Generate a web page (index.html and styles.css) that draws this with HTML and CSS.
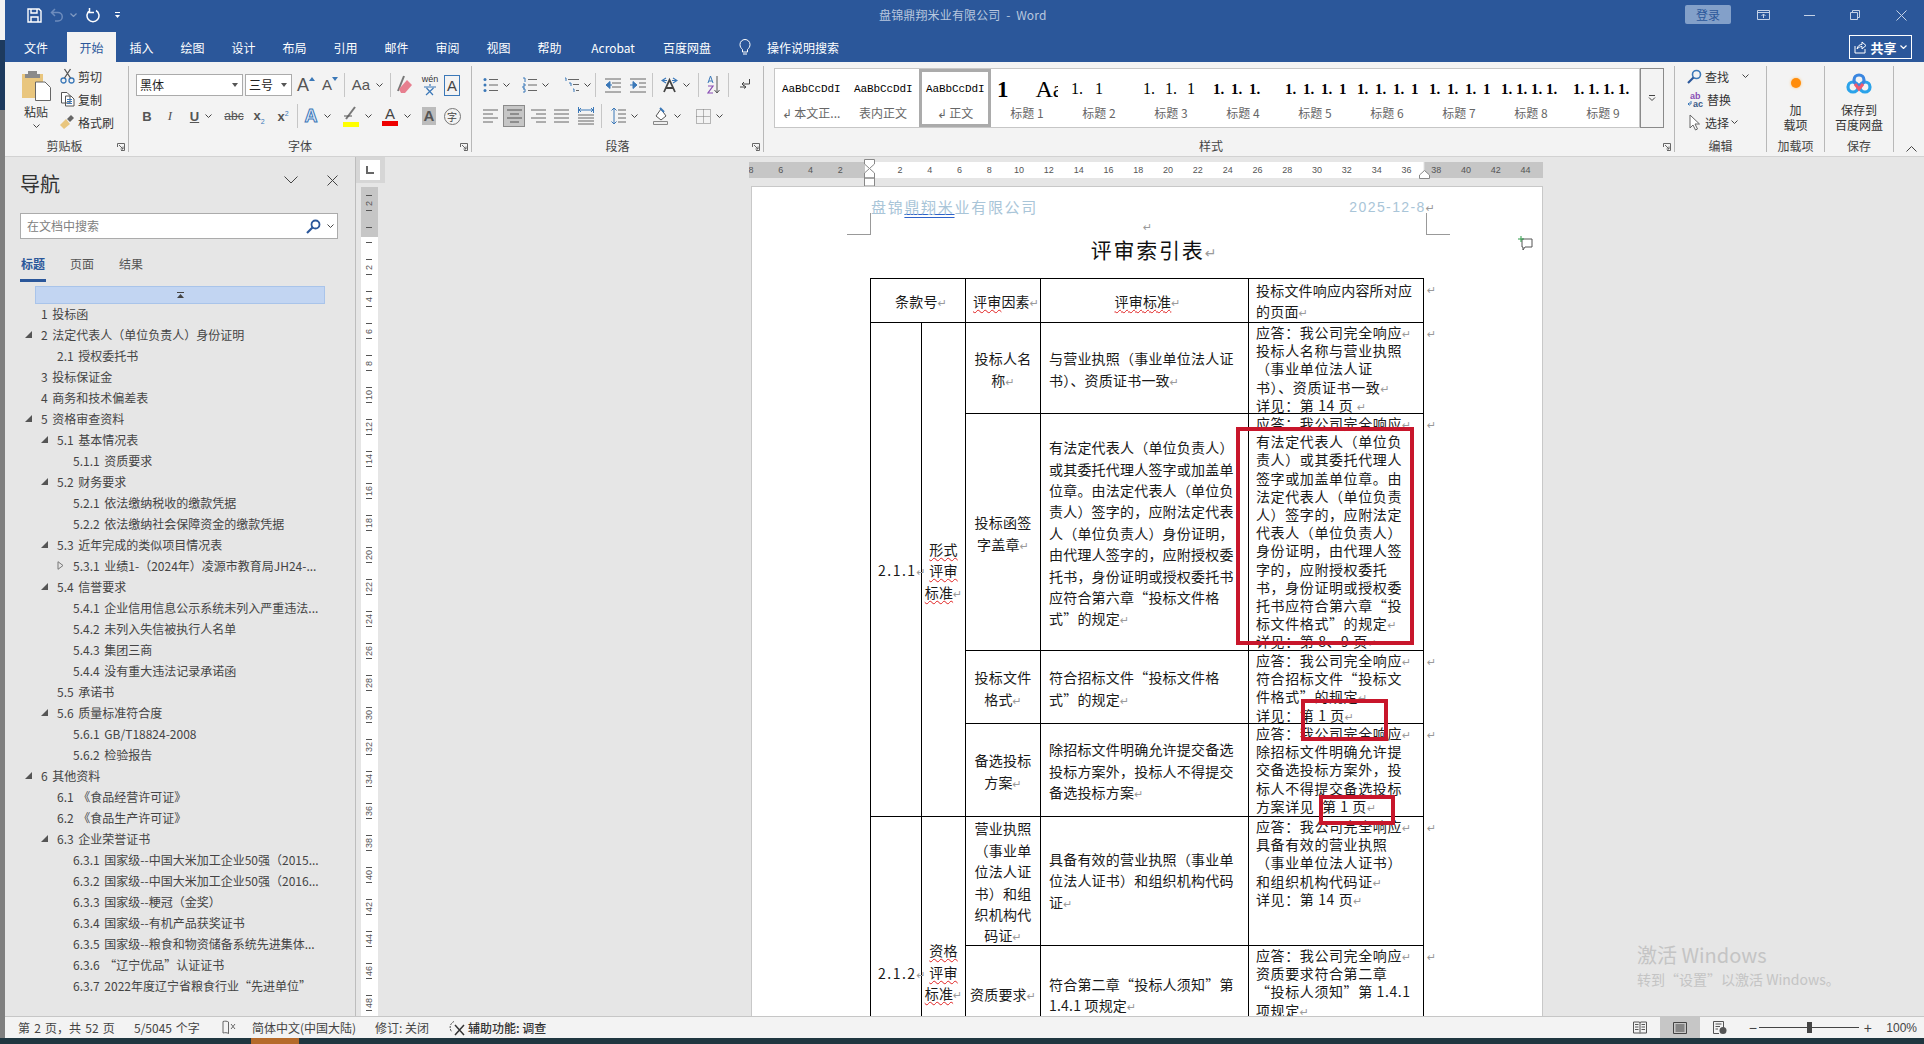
FILE: index.html
```html
<!DOCTYPE html>
<html lang="zh-CN">
<head>
<meta charset="utf-8">
<title>盘锦鼎翔米业有限公司 - Word</title>
<link rel="stylesheet" href="styles.css">
</head>
<body>
<svg class="sprite" aria-hidden="true">
  <symbol id="chev" viewBox="0 0 7 4"><path d="M.5.5 3.5 3.5 6.5.5" fill="none" stroke="#444" stroke-width="1"/></symbol>
  <symbol id="chevw" viewBox="0 0 7 4"><path d="M.5.5 3.5 3.5 6.5.5" fill="none" stroke="#fff" stroke-width="1.2"/></symbol>
  <symbol id="launch" viewBox="0 0 8 8"><path d="M.5 4V.5H7.5V7.5H4M2 2 6 6M6 3.5V6H3.5" fill="none" stroke="#666"/></symbol>
  <symbol id="tri" viewBox="0 0 7 7"><path d="M7 0V7H0Z" fill="#555"/></symbol>
</svg>
<div class="app">
  <div class="edge"></div>
  <div class="window">
    <header class="titlebar">
      <div class="qat">
        <span class="qi"><svg width="15" height="15" viewBox="0 0 15 15"><path d="M1 1H12L14 3V14H1ZM4 1V5H10V1M4 14V9H11V14" fill="none" stroke="#fff" stroke-width="1.4"/></svg></span>
        <span class="qi"><svg width="14" height="14" viewBox="0 0 14 14"><path d="M5 1 1.5 4.5 5 8M2 4.5H8A4 4 0 0 1 8 13H5" fill="none" stroke="#6d8cbd" stroke-width="1.5"/></svg></span>
        <span class="qi"><svg class="cv cv-dim"><use href="#chevw"/></svg></span>
        <span class="qi"><svg width="14" height="15" viewBox="0 0 14 15"><path d="M4 2.500A6 6 0 1 0 10 2.500M3.500 0V4.500H8" fill="none" stroke="#fff" stroke-width="1.5"/></svg></span>
        <span class="qi"><svg width="7" height="8" viewBox="0 0 7 8"><path d="M1 1.500H6" stroke="#fff"/><path d="M1 4H6L3.500 7Z" fill="#fff"/></svg></span>
      </div>
      <div class="doc-title">盘锦鼎翔米业有限公司&nbsp; -&nbsp; Word</div>
      <div class="controls">
        <button class="login">登录</button>
        <span class="ctl"><svg width="13" height="10" viewBox="0 0 13 10"><path d="M.5.5H12.500V9.500H.5ZM.5 2.500H12.500M6.500 8V4M4.500 6 6.500 4 8.500 6" fill="none" stroke="#c5d2e6"/></svg></span>
        <span class="ctl"><svg width="11" height="1" viewBox="0 0 11 1"><path d="M0 .5H11" stroke="#c5d2e6"/></svg></span>
        <span class="ctl"><svg width="10" height="10" viewBox="0 0 10 10"><path d="M.5 2.500H7.500V9.500H.5ZM2.500 2.500V.5H9.500V7.500H7.500" fill="none" stroke="#c5d2e6"/></svg></span>
        <span class="ctl"><svg width="11" height="11" viewBox="0 0 11 11"><path d="M.5.5 10.500 10.500M10.500.5 .5 10.500" stroke="#c5d2e6"/></svg></span>
      </div>
    </header>
    <nav class="tabs">
      <span class="tab tab-file">文件</span>
      <span class="tab tab-on">开始</span>
      <span class="tab">插入</span><span class="tab">绘图</span><span class="tab">设计</span><span class="tab">布局</span><span class="tab">引用</span><span class="tab">邮件</span><span class="tab">审阅</span><span class="tab">视图</span><span class="tab">帮助</span>
      <span class="tab tab-acro">Acrobat</span>
      <span class="tab tab-bd">百度网盘</span>
      <span class="bulb"><svg width="12" height="18" viewBox="0 0 12 18"><path d="M3.500 11.500C2 10 1 8.800 1 6.500A5 5 0 0 1 11 6.500C11 8.800 10 10 8.500 11.500V14H3.500ZM4 16H8" fill="none" stroke="#fff"/></svg></span>
      <span class="tell">操作说明搜索</span>
      <span class="share"><svg width="13" height="14" viewBox="0 0 13 14"><path d="M1 6V13H11V9M3 9C3.500 6 5.500 4.500 8 4.500V2L12 5.500 8 9V6.500C6 6.500 4.500 7.500 3 9Z" fill="none" stroke="#fff"/></svg><b>共享</b><svg class="cv"><use href="#chevw"/></svg></span>
    </nav>
    <section class="ribbon">
      <div class="grp g-clip">
        <div class="clip-body">
          <div class="paste">
            <svg width="29" height="32" viewBox="0 0 29 32"><path d="M0 4H21V28H0Z" fill="#e9c67e"/><path d="M6 4V1H15V4H18V8H3V4Z" fill="#8a8a8a"/><path d="M13.500 12H23L28.500 17.500V30.500H13.500Z" fill="#fff" stroke="#666"/></svg>
            <span class="paste-t">粘贴</span>
            <svg class="cv"><use href="#chev"/></svg>
          </div>
          <div class="clip-list">
            <div class="clip-row"><svg width="15" height="16" viewBox="0 0 15 16"><circle cx="3.500" cy="12.500" r="2.500" fill="none" stroke="#3b78b8" stroke-width="1.300"/><circle cx="11.500" cy="12.500" r="2.500" fill="none" stroke="#3b78b8" stroke-width="1.300"/><path d="M4.500 10 10.500 1M10.500 10 4.500 1" stroke="#555" stroke-width="1.300"/></svg>剪切</div>
            <div class="clip-row"><svg width="15" height="16" viewBox="0 0 15 16"><path d="M1.500 1.500H7L10 4.500V12H1.500ZM5.500 5H11L14 8V15H5.500Z" fill="#fff" stroke="#555"/><path d="M7 8.500H12M7 10.500H12M7 12.500H12" stroke="#3b78b8"/></svg>复制</div>
            <div class="clip-row"><svg width="15" height="16" viewBox="0 0 15 16"><path d="M0 11 6 5 10 10 4 15Z" fill="#e9c67e"/><path d="M7 5 11 1 14 4 10 8Z" fill="#666"/></svg>格式刷</div>
          </div>
        </div>
        <div class="grp-label g-clip-l">剪贴板</div>
        <svg class="launcher"><use href="#launch"/></svg>
      </div>

      <div class="grp g-font">
        <div class="rrow font-r1">
          <div class="sel sel-font">黑体<i></i></div>
          <div class="sel sel-size">三号<i></i></div>
          <span class="ib"><span class="ga">A</span><svg class="up" width="6" height="4" viewBox="0 0 6 4"><path d="M0 4 3 0 6 4Z" fill="#3b78b8"/></svg></span>
          <span class="ib"><span class="ga ga-s">A</span><svg class="up" width="6" height="4" viewBox="0 0 6 4"><path d="M0 0 3 4 6 0Z" fill="#3b78b8"/></svg></span>
          <span class="sep"></span>
          <span class="ib"><span class="ga ga-aa">Aa</span><svg class="cv"><use href="#chev"/></svg></span>
          <span class="sep"></span>
          <span class="ib"><svg width="17" height="20" viewBox="0 0 17 20"><path d="M2 16 8 1" stroke="#777" stroke-width="2"/><path d="M3 14 11 5 16 10 9 18H5Z" fill="#e77f8f"/></svg></span>
          <span class="ib ib-wen"><em>wén</em><svg width="14" height="12" viewBox="0 0 14 12"><path d="M7 0V2M1 3H13M3.500 4 10 11M10.500 4 3 11" stroke="#3b78b8" stroke-width="1.200" fill="none"/></svg></span>
          <span class="ib"><span class="ga-box">A</span></span>
        </div>
        <div class="rrow font-r2">
          <span class="ib"><b class="fb">B</b></span>
          <span class="ib"><i class="fi">I</i></span>
          <span class="ib"><u class="fb fu">U</u><svg class="cv cvg"><use href="#chev"/></svg></span>
          <span class="ib"><s class="fs">abc</s></span>
          <span class="ib"><span class="fb fx">x<sub>2</sub></span></span>
          <span class="ib"><span class="fb fx">x<sup>2</sup></span></span>
          <span class="sep"></span>
          <span class="ib"><span class="ga-glow">A</span><svg class="cv cvg"><use href="#chev"/></svg></span>
          <span class="ib"><svg width="16" height="21" viewBox="0 0 16 21"><path d="M3 13 12 1" stroke="#777" stroke-width="2"/><path d="M1 10H9" stroke="#555"/><path d="M0 16H16V21H0Z" fill="#ff0"/></svg><svg class="cv cvg"><use href="#chev"/></svg></span>
          <span class="ib"><span class="ga-col">A</span><svg class="cv cvg"><use href="#chev"/></svg></span>
          <span class="ib"><span class="ga-grey">A</span></span>
          <span class="ib"><span class="zi">字</span></span>
        </div>
        <div class="grp-label">字体</div>
        <svg class="launcher"><use href="#launch"/></svg>
      </div>

      <div class="grp g-para">
        <div class="rrow para-r1">
          <span class="ib ig"><svg width="15" height="16" viewBox="0 0 15 16"><g fill="#3b78b8"><circle cx="2" cy="2.500" r="1.500"/><circle cx="2" cy="8" r="1.500"/><circle cx="2" cy="13.500" r="1.500"/></g><path d="M6 2.500H15M6 8H15M6 13.500H15" stroke="#666"/></svg><svg class="cv"><use href="#chev"/></svg></span>
          <span class="ib ig"><svg width="15" height="16" viewBox="0 0 15 16"><path d="M1 1H3V5M1 7H3V9H1V11H3M1 12H3V15H1" fill="none" stroke="#3b78b8"/><path d="M6 2.500H15M6 8H15M6 13.500H15" stroke="#666"/></svg><svg class="cv"><use href="#chev"/></svg></span>
          <span class="ib ig"><svg width="15" height="16" viewBox="0 0 15 16"><path d="M1 1H2V4M5 6H7V9M9 12H10V15" fill="none" stroke="#3b78b8"/><path d="M4 2.500H15M9 7.500H15M12 13.500H15" stroke="#666"/></svg><svg class="cv"><use href="#chev"/></svg></span>
          <span class="sep"></span>
          <span class="ib"><svg width="16" height="15" viewBox="0 0 16 15"><path d="M0 1H16M7 5H16M7 9H16M0 14H16" stroke="#666"/><path d="M5 3.500 1 7 5 10.500ZM3 7H7" fill="#3b78b8" stroke="#3b78b8"/></svg></span>
          <span class="ib"><svg width="16" height="15" viewBox="0 0 16 15"><path d="M0 1H16M0 14H16M9 5H16M9 9H16" stroke="#666"/><path d="M3 3.500 7 7 3 10.500ZM0 7H4" fill="#3b78b8" stroke="#3b78b8"/></svg></span>
          <span class="sep"></span>
          <span class="ib ig"><svg width="17" height="16" viewBox="0 0 17 16"><path d="M5 1 1 3.500 5 6M12 1 16 3.500 12 6M2 3.500H6M11 3.500H15" fill="none" stroke="#3b78b8" stroke-width="1.200"/><path d="M3 15 8.500 3 14 15M5 11H12" fill="none" stroke="#444" stroke-width="1.800"/></svg><svg class="cv"><use href="#chev"/></svg></span>
          <span class="sep"></span>
          <span class="ib"><svg width="13" height="20" viewBox="0 0 13 20"><path d="M1 8 3.500 1 6 8M2 6H5" fill="none" stroke="#3b78b8"/><path d="M1 11H6L1 18H6" fill="none" stroke="#8a4fb5" stroke-width="1.200"/><path d="M10 1V18M7.500 15 10 18 12.500 15" fill="none" stroke="#555"/></svg></span>
          <span class="sep"></span>
          <span class="ib"><svg width="12" height="14" viewBox="0 0 12 14"><path d="M10.500 1V6H3M5 4 3 6 5 8" fill="none" stroke="#444"/><path d="M1 9H7M5 7.500 7 9 5 10.500" fill="none" stroke="#444"/></svg></span>
        </div>
        <div class="rrow para-r2">
          <span class="ib"><svg width="15" height="14" viewBox="0 0 15 14"><path d="M0 1H15M0 5H10M0 9H15M0 13H10" stroke="#666"/></svg></span>
          <span class="ib ib-on"><svg width="15" height="14" viewBox="0 0 15 14"><path d="M0 1H15M3 5H12M0 9H15M3 13H12" stroke="#555"/></svg></span>
          <span class="ib"><svg width="15" height="14" viewBox="0 0 15 14"><path d="M0 1H15M5 5H15M0 9H15M5 13H15" stroke="#666"/></svg></span>
          <span class="ib"><svg width="15" height="14" viewBox="0 0 15 14"><path d="M0 1H15M0 5H15M0 9H15M0 13H15" stroke="#666"/></svg></span>
          <span class="ib"><svg width="16" height="19" viewBox="0 0 16 19"><path d="M0 8H16M0 11H16M0 14H16M0 17H16" stroke="#666"/><path d="M1 3H15M3 1 1 3 3 5M13 1 15 3 13 5M.5 0V6M15.500 0V6" fill="none" stroke="#3b78b8"/></svg></span>
          <span class="sep"></span>
          <span class="ib ig"><svg width="15" height="18" viewBox="0 0 15 18"><path d="M3 1V17M.5 3.500 3 1 5.500 3.500M.5 14.500 3 17 5.500 14.500" fill="none" stroke="#3b78b8"/><path d="M7 3H15M7 7H15M7 11H15M7 15H15" stroke="#666"/></svg><svg class="cv"><use href="#chev"/></svg></span>
          <span class="ib ig"><svg width="16" height="18" viewBox="0 0 16 18"><path d="M3 9 8 2 13 9 8 13Z" fill="#fff" stroke="#555"/><path d="M7 1 11 5" stroke="#3b78b8" stroke-width="2"/><path d="M.5 14.500H14.500V17.500H.5Z" fill="#eee" stroke="#888"/></svg><svg class="cv"><use href="#chev"/></svg></span>
          <span class="ib ig"><svg width="15" height="15" viewBox="0 0 15 15"><path d="M.5.5H14.500V14.500H.5ZM7.500.5V14.500M.5 7.500H14.500" fill="none" stroke="#777" stroke-dasharray="1 1"/></svg><svg class="cv"><use href="#chev"/></svg></span>
        </div>
        <div class="grp-label">段落</div>
        <svg class="launcher"><use href="#launch"/></svg>
      </div>

      <div class="grp g-style">
        <div class="style-wrap">
          <div class="gallery">
            <div class="st"><div class="pv pv-m">AaBbCcDdI</div><div class="st-l">↲ 本文正...</div></div>
            <div class="st"><div class="pv pv-m">AaBbCcDdI</div><div class="st-l">表内正文</div></div>
            <div class="st st-on"><div class="pv pv-m">AaBbCcDdI</div><div class="st-l">↲ 正文</div></div>
            <div class="st"><div class="pv pv-h1"><b>1</b><span class="pv-aa">Aa</span></div><div class="st-l">标题 1</div></div>
            <div class="st"><div class="pv pv-n pv-w1">1. 1</div><div class="st-l">标题 2</div></div>
            <div class="st"><div class="pv pv-n pv-w2">1. 1. 1</div><div class="st-l">标题 3</div></div>
            <div class="st"><div class="pv pv-n pv-b pv-w3">1. 1. 1.</div><div class="st-l">标题 4</div></div>
            <div class="st"><div class="pv pv-n pv-b pv-w3">1. 1. 1. 1</div><div class="st-l">标题 5</div></div>
            <div class="st"><div class="pv pv-n pv-b pv-w3">1. 1. 1. 1</div><div class="st-l">标题 6</div></div>
            <div class="st"><div class="pv pv-n pv-b pv-w3">1. 1. 1. 1</div><div class="st-l">标题 7</div></div>
            <div class="st"><div class="pv pv-n pv-b">1. 1. 1. 1.</div><div class="st-l">标题 8</div></div>
            <div class="st"><div class="pv pv-n pv-b">1. 1. 1. 1.</div><div class="st-l">标题 9</div></div>
          </div>
          <div class="gal-more"><svg width="8" height="6" viewBox="0 0 8 6"><path d="M1 .5H7" stroke="#444"/><path d="M1 2.500 4 5.500 7 2.500" fill="none" stroke="#444"/></svg></div>
        </div>
        <div class="grp-label g-style-l">样式</div>
        <svg class="launcher"><use href="#launch"/></svg>
      </div>

      <div class="grp g-edit">
        <div class="clip-list edit-list">
          <div class="clip-row"><svg width="15" height="15" viewBox="0 0 15 15"><circle cx="9.500" cy="5.500" r="4" fill="none" stroke="#3b78b8" stroke-width="1.600"/><path d="M6.500 8.500 1 14" stroke="#2b579a" stroke-width="2.200"/></svg>查找<svg class="cv cv-find"><use href="#chev"/></svg></div>
          <div class="clip-row"><svg class="ab" width="17" height="17" viewBox="0 0 17 17"><text x="3" y="8" class="abt abp">ab</text><text x="6" y="16" class="abt">ac</text><path d="M4 10V13H1M2.500 11.500 1 13 2.500 14.500" fill="none" stroke="#3b78b8"/></svg>替换</div>
          <div class="clip-row"><svg width="15" height="17" viewBox="0 0 15 17"><path d="M3 1V14L6 11 8.500 16 10.500 15 8 10H12.500Z" fill="#fff" stroke="#666"/></svg>选择<svg class="cv cv-sel"><use href="#chev"/></svg></div>
        </div>
        <div class="grp-label">编辑</div>
      </div>

      <div class="grp g-addin">
        <div class="big-ic"><span class="dot"></span></div>
        <div class="big-t">加<br>载项</div>
        <div class="grp-label">加载项</div>
      </div>

      <div class="grp g-save">
        <div class="big-ic"><svg width="26" height="21" viewBox="0 0 26 21"><circle cx="7" cy="14" r="5" fill="none" stroke="#2aa3ea" stroke-width="3.200"/><circle cx="19" cy="14" r="5" fill="none" stroke="#2aa3ea" stroke-width="3.200"/><circle cx="13" cy="7" r="5" fill="none" stroke="#3a86e0" stroke-width="3.200"/><path d="M9 11 13 16 17 11" fill="none" stroke="#ee5a70" stroke-width="3"/></svg></div>
        <div class="big-t">保存到<br>百度网盘</div>
        <div class="grp-label">保存</div>
      </div>

      <div class="collapse"><svg width="11" height="6" viewBox="0 0 11 6"><path d="M.5 5.500 5.500.5 10.500 5.500" fill="none" stroke="#444"/></svg></div>
    </section>

    <main class="work">
      <aside class="nav">
        <div class="nav-head">
          <span class="nav-title">导航</span>
          <svg class="nav-down" width="14" height="8" viewBox="0 0 14 8"><path d="M.5.5 7 7 13.500.5" fill="none" stroke="#444"/></svg>
          <svg class="nav-x" width="11" height="11" viewBox="0 0 11 11"><path d="M.5.5 10.500 10.500M10.500.5 .5 10.500" stroke="#444"/></svg>
        </div>
        <div class="search"><span>在文档中搜索</span><svg width="15" height="15" viewBox="0 0 15 15"><circle cx="9.500" cy="5.500" r="4" fill="none" stroke="#2b579a" stroke-width="1.800"/><path d="M6.500 8.500 1 14" stroke="#2b579a" stroke-width="2.200"/></svg><svg class="cv"><use href="#chev"/></svg></div>
        <div class="nav-tabs"><span class="ntab ntab-on">标题</span><span class="ntab">页面</span><span class="ntab">结果</span></div>
        <div class="tree-top"><svg width="7" height="6" viewBox="0 0 7 6"><path d="M0 .5H7" stroke="#444"/><path d="M0 6 3.500 2 7 6Z" fill="#444"/></svg></div>
        <ul class="tree">
          <li class="l1">1 投标函</li>
          <li class="l1"><svg class="tw"><use href="#tri"/></svg>2 法定代表人（单位负责人）身份证明</li>
          <li class="l2">2.1 授权委托书</li>
          <li class="l1">3 投标保证金</li>
          <li class="l1">4 商务和技术偏差表</li>
          <li class="l1"><svg class="tw"><use href="#tri"/></svg>5 资格审查资料</li>
          <li class="l2"><svg class="tw"><use href="#tri"/></svg>5.1 基本情况表</li>
          <li class="l3">5.1.1 资质要求</li>
          <li class="l2"><svg class="tw"><use href="#tri"/></svg>5.2 财务要求</li>
          <li class="l3">5.2.1 依法缴纳税收的缴款凭据</li>
          <li class="l3">5.2.2 依法缴纳社会保障资金的缴款凭据</li>
          <li class="l2"><svg class="tw"><use href="#tri"/></svg>5.3 近年完成的类似项目情况表</li>
          <li class="l3"><svg class="tw tw-c" viewBox="0 0 7 9"><path d="M1 .7 6 4.500 1 8.300Z" fill="none" stroke="#777"/></svg>5.3.1 业绩1-（2024年）凌源市教育局JH24-...</li>
          <li class="l2"><svg class="tw"><use href="#tri"/></svg>5.4 信誉要求</li>
          <li class="l3">5.4.1 企业信用信息公示系统未列入严重违法...</li>
          <li class="l3">5.4.2 未列入失信被执行人名单</li>
          <li class="l3">5.4.3 集团三商</li>
          <li class="l3">5.4.4 没有重大违法记录承诺函</li>
          <li class="l2">5.5 承诺书</li>
          <li class="l2"><svg class="tw"><use href="#tri"/></svg>5.6 质量标准符合度</li>
          <li class="l3">5.6.1 GB/T18824-2008</li>
          <li class="l3">5.6.2 检验报告</li>
          <li class="l1"><svg class="tw"><use href="#tri"/></svg>6 其他资料</li>
          <li class="l2">6.1 《食品经营许可证》</li>
          <li class="l2">6.2 《食品生产许可证》</li>
          <li class="l2"><svg class="tw"><use href="#tri"/></svg>6.3 企业荣誉证书</li>
          <li class="l3">6.3.1 国家级--中国大米加工企业50强（2015...</li>
          <li class="l3">6.3.2 国家级--中国大米加工企业50强（2016...</li>
          <li class="l3">6.3.3 国家级--粳冠（金奖）</li>
          <li class="l3">6.3.4 国家级--有机产品获奖证书</li>
          <li class="l3">6.3.5 国家级--粮食和物资储备系统先进集体...</li>
          <li class="l3">6.3.6 “辽宁优品”认证证书</li>
          <li class="l3">6.3.7 2022年度辽宁省粮食行业“先进单位”</li>
        </ul>
      </aside>

      <div class="vside">
        <div class="tabsel"><span><svg width="8" height="8" viewBox="0 0 8 8"><path d="M1 0V7H8" fill="none" stroke="#666" stroke-width="2"/></svg></span></div>
        <div class="vruler">
          <span>2</span><span></span><span>2</span><span>4</span><span>6</span><span>8</span><span>10</span><span>12</span><span>14</span><span>16</span><span>18</span><span>20</span><span>22</span><span>24</span><span>26</span><span>28</span><span>30</span><span>32</span><span>34</span><span>36</span><span>38</span><span>40</span><span>42</span><span>44</span><span>46</span><span>48</span>
        </div>
      </div>

      <div class="docarea">
        <div class="hruler">
          <span>8</span><span>6</span><span>4</span><span>2</span><span></span><span>2</span><span>4</span><span>6</span><span>8</span><span>10</span><span>12</span><span>14</span><span>16</span><span>18</span><span>20</span><span>22</span><span>24</span><span>26</span><span>28</span><span>30</span><span>32</span><span>34</span><span>36</span><span>38</span><span>40</span><span>42</span><span>44</span>
        </div>
        <svg class="ind ind-l" width="11" height="28" viewBox="0 0 11 28"><path d="M.5.5H10.500V5L5.500 9.500 .5 5Z" fill="#fff" stroke="#888"/><path d="M5.500 9.500 10.500 14V19H.5V14ZM.5 19H10.500V27H.5Z" fill="#fff" stroke="#888"/></svg>
        <svg class="ind ind-r" width="11" height="9" viewBox="0 0 11 9"><path d="M5.500.5 10.500 5V8.500H.5V5Z" fill="#fff" stroke="#888"/></svg>

        <article class="page">
          <i class="crop crop-l"></i><i class="crop crop-r"></i>
          <div class="ph"><span>盘锦<u class="blue-u">鼎翔米</u>业有限公司</span><span class="ph-date">2025-12-8<span class="pm">↵</span></span></div>
          <div class="ph-pm"><span class="pm">↵</span></div>
          <h1 class="doc-h">评审索引表<span class="pm pm-h">↵</span></h1>
          <svg class="cmt" width="15" height="15" viewBox="0 0 15 15"><path d="M4 3H14V11H7L5 14V11H4Z" fill="#fff" stroke="#555"/><path d="M3 0V6M0 3H6" stroke="#2d9a48"/></svg>

          <table class="rt">
            <colgroup><col class="c1"><col class="c2"><col class="c3"><col class="c4"><col class="c5"><col class="c6"></colgroup>
            <tr class="r0">
              <td colspan="2" class="ctr mid">条款号<span class="pm">↵</span></td>
              <td class="ctr mid"><u class="sp">评审</u>因素<span class="pm">↵</span></td>
              <td class="ctr mid"><u class="sp">评审标准</u><span class="pm">↵</span></td>
              <td class="hdr-r mid">投标文件响应内容所对应<br>的页面<span class="pm">↵</span></td>
              <td class="eor"><span class="pm">↵</span></td>
            </tr>
            <tr class="r1">
              <td rowspan="4" class="ctr no">2.1.1<span class="pm">↵</span></td>
              <td rowspan="4" class="ctr mid"><u class="sp">形式</u><br><u class="sp">评审</u><br><u class="sp">标准</u><span class="pm">↵</span></td>
              <td class="ctr mid">投标人名<br>称<span class="pm">↵</span></td>
              <td class="std mid">与营业执照（事业单位法人证<br>书）、资质证书一致<span class="pm">↵</span></td>
              <td class="resp"><div class="ln">应答：我公司完全响应<span class="pm">↵</span><br>投标人名称与营业执照<br>（事业单位法人证<br>书）、资质证书一致<span class="pm">↵</span><br>详见：第 14 页 <span class="pm">↵</span></div></td>
              <td class="eor"><span class="pm">↵</span></td>
            </tr>
            <tr class="r2">
              <td class="ctr mid">投标函签<br>字盖章<span class="pm">↵</span></td>
              <td class="std mid">有法定代表人（单位负责人）<br>或其委托代理人签字或加盖单<br>位章。由法定代表人（单位负<br>责人）签字的，应附法定代表<br>人（单位负责人）身份证明，<br>由代理人签字的，应附授权委<br>托书，身份证明或授权委托书<br>应符合第六章“投标文件格<br>式”的规定<span class="pm">↵</span></td>
              <td class="resp"><div class="ln">应答：我公司完全响应<span class="pm">↵</span><br>有法定代表人（单位负<br>责人）或其委托代理人<br>签字或加盖单位章。由<br>法定代表人（单位负责<br>人）签字的，应附法定<br>代表人（单位负责人）<br>身份证明，由代理人签<br>字的，应附授权委托<br>书，身份证明或授权委<br>托书应符合第六章“投<br>标文件格式”的规定<span class="pm">↵</span><br>详见：第 8、9 页<span class="pm">↵</span></div></td>
              <td class="eor"><span class="pm">↵</span></td>
            </tr>
            <tr class="r3">
              <td class="ctr mid">投标文件<br>格式<span class="pm">↵</span></td>
              <td class="std mid">符合招标文件“投标文件格<br>式”的规定<span class="pm">↵</span></td>
              <td class="resp"><div class="ln">应答：我公司完全响应<span class="pm">↵</span><br>符合招标文件“投标文<br>件格式”的规定<span class="pm">↵</span><br>详见：第 1 页<span class="pm">↵</span></div></td>
              <td class="eor"><span class="pm">↵</span></td>
            </tr>
            <tr class="r4">
              <td class="ctr mid">备选投标<br>方案<span class="pm">↵</span></td>
              <td class="std mid">除招标文件明确允许提交备选<br>投标方案外，投标人不得提交<br>备选投标方案<span class="pm">↵</span></td>
              <td class="resp"><div class="ln">应答：我公司完全响应<span class="pm">↵</span><br>除招标文件明确允许提<br>交备选投标方案外，投<br>标人不得提交备选投标<br>方案详见 &nbsp;第 1 页<span class="pm">↵</span></div></td>
              <td class="eor"><span class="pm">↵</span></td>
            </tr>
            <tr class="r5">
              <td rowspan="3" class="ctr no">2.1.2<span class="pm">↵</span></td>
              <td rowspan="3" class="ctr mid"><u class="sp">资格</u><br><u class="sp">评审</u><br><u class="sp">标准</u><span class="pm">↵</span></td>
              <td class="ctr mid"><div class="ln">营业执照<br>（事业单<br>位法人证<br>书）和组<br>织机构代<br>码证<span class="pm">↵</span></div></td>
              <td class="std mid">具备有效的营业执照（事业单<br>位法人证书）和组织机构代码<br>证<span class="pm">↵</span></td>
              <td class="resp"><div class="ln">应答：我公司完全响应<span class="pm">↵</span><br>具备有效的营业执照<br>（事业单位法人证书）<br>和组织机构代码证<span class="pm">↵</span><br>详见：第 14 页<span class="pm">↵</span></div></td>
              <td class="eor"><span class="pm">↵</span></td>
            </tr>
            <tr class="r6">
              <td class="ctr mid">资质要求<span class="pm">↵</span></td>
              <td class="std mid">符合第二章“投标人须知”第<br>1.4.1 项规定<span class="pm">↵</span></td>
              <td class="resp"><div class="ln">应答：我公司完全响应<span class="pm">↵</span><br>资质要求符合第二章<br>“投标人须知”第 1.4.1<br>项规定<span class="pm">↵</span></div></td>
              <td class="eor"><span class="pm">↵</span></td>
            </tr>
            <tr class="r7"><td></td><td></td><td></td><td class="eor"></td></tr>
          </table>

          <i class="mark mark-a"></i>
          <i class="mark mark-b"></i>
          <i class="mark mark-c"></i>
        </article>

        <div class="wm"><div class="wm-a">激活 Windows</div><div class="wm-b">转到“设置”以激活 Windows。</div></div>
      </div>
    </main>

    <footer class="status">
      <span class="s-page">第 2 页，共 52 页</span>
      <span class="s-words">5/5045 个字</span>
      <svg class="s-book" width="14" height="15" viewBox="0 0 14 15"><path d="M6.500 2C5 1 3 1 1 1.500V13C3 12.500 5 12.500 6.500 13.500ZM6.500 2V13.500" fill="none" stroke="#666"/><path d="M9 4 13 9M13 4 9 9" stroke="#666"/></svg>
      <span class="s-lang">简体中文(中国大陆)</span>
      <span class="s-rev">修订: 关闭</span>
      <svg class="s-acc" width="16" height="16" viewBox="0 0 16 16"><path d="M5 1.500A6.500 6.500 0 0 0 3 12" fill="none" stroke="#555" stroke-dasharray="2 1"/><path d="M6 5 15 15M15 5 6 15" stroke="#333" stroke-width="1.500"/></svg>
      <span class="s-a11y">辅助功能: 调查</span>
      <div class="s-right">
        <span class="v"><svg width="14" height="13" viewBox="0 0 14 13"><path d="M.5 1H6.500L7 2 7.500 1H13.500V12H7.500L7 12.500 6.500 12H.5ZM7 2V12M2 3.500H5.500M2 6H5.500M2 8.500H5.500M8.500 3.500H12M8.500 6H12M8.500 8.500H12" fill="none" stroke="#555"/></svg></span>
        <span class="v v-on"><svg width="14" height="12" viewBox="0 0 14 12"><path d="M.5.5H13.500V11.500H.5ZM2.500 3H11.500M2.500 5H11.500M2.500 7H11.500M2.500 9H11.500" fill="none" stroke="#444"/></svg></span>
        <span class="v"><svg width="14" height="13" viewBox="0 0 14 13"><path d="M.5.5H10.500V7M6 12.500H.5V.5M2.500 3H8.500M2.500 5.500H7M2.500 8H5" fill="none" stroke="#555"/><circle cx="10" cy="9.500" r="3.500" fill="#555"/></svg></span>
        <span class="zm">−</span>
        <span class="slider"><i></i></span>
        <span class="zm zm-p">+</span>
        <span class="pct">100%</span>
      </div>
    </footer>
  </div>
</div>
<div class="taskbar"><i></i></div>
</body>
</html>
```

FILE: styles.css
```css
* { box-sizing: border-box; }
html, body { margin: 0; padding: 0; }
body {
  width: 1924px; height: 1044px; overflow: hidden;
  font-family: "Noto Sans CJK SC", "Liberation Sans", sans-serif;
  font-size: 12px; color: #333; background: #e6e6e6;
}
.sprite { position: absolute; width: 0; height: 0; }
.app { display: flex; height: 1038px; }
.edge {
  width: 5px; flex: none;
  background: linear-gradient(#f3f3f3 0 40px, #1d3a5e 40px 110px, #7f7f7f 110px);
}
.window { width: 1919px; display: flex; flex-direction: column; }
.taskbar { height: 6px; background: #1f3640; }
.taskbar i { display: block; width: 48px; height: 6px; margin-left: 251px; background: #b56a2a; }

/* title bar */
.titlebar { height: 32px; background: #2b579a; display: flex; align-items: flex-start; }
.qat { width: 874px; flex: none; display: grid; grid-template-columns: 19px 21px 23px 11px 27px 22px; height: 32px; align-items: center; padding-bottom: 2px; justify-items: center; }
.qat::before { content: ""; }
.qi { display: flex; }
.cv { width: 7px; height: 4px; flex: none; }
.cv-dim { opacity: .4; }
.doc-title { color: #b8c7df; line-height: 30px; font-size: 12px; letter-spacing: .15px; white-space: nowrap; }
.controls { margin-left: auto; display: flex; align-items: center; height: 30px; }
.login { width: 46px; height: 19px; margin: 0 9px 1px 0; padding: 0; border: 0; border-radius: 2px; background: #83a0c9; color: #2b579a; font: 12px/19px "Noto Sans CJK SC", sans-serif; }
.ctl { width: 46px; height: 30px; display: flex; align-items: center; justify-content: center; }

/* tabs */
.tabs { height: 30px; background: #2b579a; display: flex; align-items: stretch; color: #fff; }
.tab { width: 51px; display: flex; align-items: center; justify-content: center; font-size: 12px; }
.tab-file { width: 62px; }
.tab-on { width: 49px; background: #f3f3f3; color: #2b579a; }
.tab-acro { width: 76px; }
.tab-bd { width: 72px; }
.bulb { width: 44px; display: flex; align-items: center; justify-content: center; }
.tell { display: flex; align-items: center; }
.share { margin: 3px 12px 3px auto; width: 63px; border: 1px solid #fff; display: flex; align-items: center; justify-content: center; gap: 3px; }
.share b { font-size: 13px; font-weight: 700; }

/* ribbon */
.ribbon { height: 95px; background: #f3f3f3; border-bottom: 1px solid #d2d2d2; display: flex; align-items: flex-start; padding-top: 4px; }
.grp { position: relative; flex: none; height: 86px; border-right: 1px solid #b8b8b8; }
.grp-label { position: absolute; left: 0; right: 0; bottom: -2px; height: 16px; line-height: 16px; text-align: center; color: #444; }
.launcher { position: absolute; right: 3px; bottom: 1px; width: 8px; height: 8px; }
.g-clip { width: 124px; }
.g-clip-l { right: 4px; }
.g-font { width: 343px; padding: 7px 0 0 7px; }
.g-para { width: 292px; padding: 7px 0 0 9px; }
.g-style { width: 911px; padding: 2px 0 0 10px; }
.g-style-l { right: 16px; }
.g-edit { width: 92px; }
.g-addin { width: 58px; }
.g-save { width: 69px; }

.clip-body { display: flex; }
.paste { width: 47px; padding: 4px 0 0 15px; display: flex; flex-direction: column; align-items: center; flex: none; }
.paste svg { flex: none; }
.paste-t { line-height: 16px; margin-top: 2px; font-size: 12px; color: #333; white-space: nowrap; }
.paste .cv { margin-top: 4px; }
.clip-list { display: flex; flex-direction: column; gap: 3px; margin-left: 8px; }
.clip-row { height: 20px; display: flex; align-items: center; gap: 3px; color: #333; white-space: nowrap; }
.clip-row svg { flex: none; }
.edit-list { margin-left: 0; padding-left: 12px; }
.cv-find { margin-left: 10px; }
.cv-sel { margin-left: -1px; }
.abt { font: 700 9px "Liberation Sans", sans-serif; fill: #3b5a88; }
.abp { fill: #8a4fb5; }

.rrow { display: grid; height: 22px; align-items: center; justify-items: center; }
.font-r1 { grid-template-columns: 109px 49px 24px 24px 3px 45px 1px 27px 24px 20px; }
.font-r2 { margin-top: 9px; grid-template-columns: 22px 24px 38px 28px 22px 26px 2px 39px 40px 39px 26px 20px; }
.para-r1 { grid-template-columns: 31px 47px 36px 1px 34px 16px 7px 45px 1px 29px 1px 32px; }
.para-r2 { margin-top: 9px; grid-template-columns: 19px 28px 21px 25px 24px 4px 44px 42px 42px; }
.ib { display: flex; align-items: center; justify-content: center; gap: 6px; height: 22px; position: relative; color: #444; white-space: nowrap; }
.ig { gap: 5px; }
.ib-on { width: 22px; background: #c6c6c6; border: 1px solid #8a8a8a; }
.sep { width: 1px; height: 24px; background: #c6c6c6; justify-self: end; }

.sel { position: relative; width: 100%; height: 22px; background: #fff; border: 1px solid #ababab; line-height: 20px; padding-left: 3px; color: #222; }
.sel-font { width: 107px; justify-self: start; }
.sel-size { width: 47px; justify-self: start; }
.sel i { position: absolute; right: 4px; top: 8px; border: 3px solid transparent; border-top: 4px solid #555; border-bottom: 0; }

.ga { font: 18px/22px "Liberation Sans", sans-serif; color: #555; }
.ga-s { font-size: 15px; }
.ga-aa { font-size: 15px; }
.up { margin: -12px 0 0 -6px; }
.ib-wen { flex-direction: column; gap: 0; }
.ib-wen em { font: 9px/9px "Liberation Sans", sans-serif; color: #333; }
.ga-box { display: block; width: 16px; height: 21px; border: 1px solid #3b78b8; font: 15px/19px "Liberation Sans", sans-serif; text-align: center; color: #444; }
.fb { font: 700 13px "Liberation Sans", sans-serif; color: #555; }
.fi { font: italic 13px "Liberation Serif", serif; color: #555; }
.fu { text-decoration: underline; }
.fs { font: 12px "Liberation Sans", sans-serif; color: #555; }
.fx sub, .fx sup { font-size: 7px; color: #3b78b8; font-weight: 400; }
.ga-glow { font: 700 18px/22px "Liberation Sans", sans-serif; color: #e4eefb; -webkit-text-stroke: 1px #3b78b8; }
.ga-col { font: 15px/14px "Liberation Sans", sans-serif; color: #444; border-bottom: 5px solid #e00; width: 16px; text-align: center; }
.ga-grey { display: block; width: 14px; height: 18px; background: #bcbcbc; font: 700 15px/18px "Liberation Sans", sans-serif; text-align: center; color: #555; }
.zi { display: block; width: 17px; height: 17px; border: 1px solid #777; border-radius: 50%; font-size: 10px; line-height: 15px; text-align: center; color: #444; }

.style-wrap { display: flex; }
.gallery { width: 866px; height: 60px; background: #fff; border: 1px solid #c6c6c6; display: flex; }
.st { width: 72px; height: 58px; flex: none; padding: 4px 5px 0; text-align: center; }
.st-on { box-shadow: inset 0 0 0 3px #ababab; }
.pv { height: 32px; line-height: 32px; overflow: hidden; white-space: nowrap; text-align: left; color: #000; }
.pv-m { font: 11px/32px "Liberation Mono", monospace; padding-left: 2px; letter-spacing: -.1px; }
.pv-h1 { font: 700 23px/32px "Liberation Serif", serif; padding-left: 1px; }
.pv-aa { font: 400 24px/32px "Liberation Serif", serif; margin-left: 27px; }
.pv-n { font: 400 16px/32px "Liberation Serif", serif; padding-left: 3px; white-space: pre; }
.pv-w1 { word-spacing: 8px; }
.pv-w2 { word-spacing: 6px; }
.pv-w3 { word-spacing: 3px; }
.pv-b { font-weight: 700; font-size: 15px; padding-left: 1px; letter-spacing: 0; }
.st-l { height: 16px; line-height: 16px; font-size: 12px; color: #666; white-space: nowrap; }
.gal-more { width: 24px; height: 60px; border: 1px solid #8a8a8a; display: flex; align-items: center; justify-content: center; }

.big-ic { height: 34px; display: flex; align-items: center; justify-content: center; }
.dot { width: 10px; height: 10px; border-radius: 50%; background: #ff8c0a; box-shadow: 0 0 3px #ffc070; }
.big-t { text-align: center; line-height: 15px; margin-top: 2px; color: #333; white-space: nowrap; }
.collapse { flex: 1; height: 86px; padding: 80px 0 0 12px; display: flex; }

/* workspace */
.work { height: 859px; display: flex; background: #e6e6e6; overflow: hidden; }
.nav { width: 350px; flex: none; padding: 12px 17px 0 15px; }
.nav-head { height: 30px; display: flex; align-items: center; }
.nav-title { font-size: 20px; line-height: 30px; color: #333; }
.nav-down { margin-left: 224px; margin-top: -8px; }
.nav-x { margin-left: 29px; margin-top: -8px; }
.search { height: 26px; margin-top: 14px; background: #fff; border: 1px solid #ababab; display: flex; align-items: center; padding: 0 0 2px 6px; color: #808080; }
.search span { flex: 1; }
.search svg { margin-top: 2px; }
.search svg:first-of-type { margin-right: 6px; }
.search .cv { margin-right: 3px; }
.nav-tabs { margin-top: 15px; height: 28px; display: flex; gap: 23px; color: #555; }
.ntab { width: 26px; text-align: center; line-height: 20px; height: 28px; }
.ntab-on { color: #2b579a; font-weight: 700; border-bottom: 3px solid #2b579a; }
.tree-top { width: 290px; height: 18px; margin: 4px 0 0 15px; background: #c2d5f2; border: 1px solid #a9c4ea; display: flex; align-items: center; justify-content: center; }
.tree { list-style: none; margin: -1px 0 0; padding: 0; width: 330px; color: #444; word-spacing: 2px; }
.tree li { height: 21px; line-height: 21px; display: flex; align-items: center; white-space: nowrap; }
.l1 { padding-left: 21px; }
.l2 { padding-left: 37px; }
.l3 { padding-left: 53px; }
.tw { width: 7px; height: 7px; margin-left: -16px; margin-right: 9px; flex: none; }
.tw-c { height: 9px; }

.vside { width: 394px; flex: none; border-left: 1px solid #bdbdbd; }
.tabsel { width: 29px; height: 26px; background: #d6d6d6; padding: 3px 0 0 4px; }
.tabsel span { width: 20px; height: 20px; background: #fff; display: flex; align-items: center; justify-content: center; }
.vruler {
  width: 17px; height: 829px; margin: 4px 0 0 5px; display: flex; flex-direction: column;
  background: linear-gradient(#c6c6c6 0 50px, #fff 50px);
}
.vruler span {
  flex: none; height: 32px; display: flex; align-items: center; justify-content: center;
  font: 9px/1 "Liberation Sans", sans-serif; color: #555; position: relative;
  writing-mode: vertical-rl; transform: rotate(180deg);
}
.vruler span::before, .vruler span::after { content: ""; position: absolute; left: 0; right: 0; width: 6px; height: 1px; margin: 0 auto; background: #555; }
.vruler span::before { top: 8px; }
.vruler span::after { bottom: 8px; }

.docarea { position: relative; flex: 1; padding-top: 5px; overflow: hidden; }
.hruler {
  width: 794px; height: 16px; display: flex; overflow: hidden;
  background: linear-gradient(to right, #c6c6c6 0 116px, #fff 116px 674px, #c6c6c6 676px);
  font: 9px/16px "Liberation Sans", sans-serif; color: #555;
}
.hruler span { width: 29.8px; flex: none; text-align: center; }
.hruler span:first-child { margin-left: -13px; }
.ind { position: absolute; }
.ind-l { left: 115px; top: 2px; }
.ind-r { left: 670px; top: 13px; }

.page { position: relative; width: 792px; height: 840px; margin: 8px 0 0 2px; padding: 10px 0 0 119px; background: #fff; border: 1px solid #c8c8c8; border-bottom: 0; overflow: hidden; }
.ph { width: 564px; height: 20px; line-height: 20px; display: flex; justify-content: space-between; font-size: 15px; letter-spacing: 1.7px; color: #a9c5d8; white-space: nowrap; }
.ph-date { font: 14px/20px "Liberation Sans", sans-serif; letter-spacing: 1.4px; }
.blue-u { text-decoration: underline double #2f62c9; }
.ph-pm { height: 18px; line-height: 18px; width: 553px; text-align: center; }
.doc-h { height: 28px; margin: 0 0 15px; width: 553px; text-align: center; font-size: 21px; line-height: 28px; font-weight: 400; color: #111; letter-spacing: 1.8px; padding-left: 12px; }
.pm { color: #9a9a9a; font: 11px/0 "DejaVu Sans", sans-serif; letter-spacing: 0; }
.pm-h { font-size: 14px; }
.crop { position: absolute; width: 24px; height: 22px; border-bottom: 1px solid #999; }
.crop-l { left: 95px; top: 26px; border-right: 1px solid #999; }
.crop-r { left: 674px; top: 26px; border-left: 1px solid #999; }
.cmt { position: absolute; left: 766px; top: 49px; }

.rt { border-collapse: collapse; table-layout: fixed; width: 573px; margin-left: -1px; color: #1a1a1a; font-size: 14px; }
.c1 { width: 51px; } .c2 { width: 44px; } .c3 { width: 75px; } .c4 { width: 208px; } .c5 { width: 175px; } .c6 { width: 20px; }
.rt td { border: 1px solid #000; padding: 0; white-space: nowrap; }
.rt .eor { border: 0; vertical-align: top; padding: 0 0 0 3px; line-height: 18.2px; }
.r0 { height: 44px; } .r1 { height: 91px; } .r2 { height: 237px; } .r3 { height: 73px; } .r4 { height: 93px; }
.r5 { height: 129px; } .r6 { height: 96px; } .r7 { height: 87px; }
.ln { margin-bottom: -3px; }
.ctr { text-align: center; line-height: 21.4px; letter-spacing: .2px; }
.rt td.mid { vertical-align: middle; padding-top: 3px; }
.rt .r0 td.mid { padding-top: 1px; line-height: 21px; }
.rt .r0 td.ctr { padding-left: 6px; }
.rt .r5 td.mid { padding-top: 0; }
.rt td.no { vertical-align: middle; text-align: left; padding-left: 7px; padding-top: 3px; letter-spacing: 1.5px; line-height: 21.4px; }
.rt td.std { padding-left: 8px; line-height: 21.4px; letter-spacing: .2px; }
.rt td.hdr-r { padding-left: 7px; letter-spacing: .2px; }
.rt td.resp { vertical-align: top; padding-left: 7px; line-height: 18.2px; letter-spacing: .6px; }
.sp { text-decoration: underline wavy #e02020 1px; text-underline-offset: 2px; text-decoration-skip-ink: none; }

.mark { position: absolute; border: 4px solid #c8162b; }
.mark-a { left: 484px; top: 240px; width: 178px; height: 218px; }
.mark-b { left: 549px; top: 512px; width: 87px; height: 42px; }
.mark-c { left: 567px; top: 608px; width: 76px; height: 30px; }

.wm { position: absolute; left: 888px; top: 785px; color: #c4c4c4; white-space: nowrap; }
.wm-a { font-size: 20px; line-height: 26px; }
.wm-b { font-size: 14px; line-height: 22px; }

/* status */
.status { height: 22px; background: #f3f3f3; border-top: 1px solid #c6c6c6; display: flex; align-items: center; color: #444; white-space: nowrap; }
.s-page { margin-left: 13px; width: 116px; word-spacing: 1.5px; }
.s-words { width: 88px; word-spacing: 1px; }
.s-book { width: 14px; flex: none; }
.s-lang { margin-left: 16px; width: 123px; }
.s-rev { width: 74px; }
.s-acc { flex: none; margin-right: 3px; }
.s-a11y { font-weight: 500; color: #333; }
.s-right { margin-left: auto; display: flex; align-items: center; height: 21px; }
.v { width: 40px; height: 21px; display: flex; align-items: center; justify-content: center; }
.v-on { background: #c6c6c6; }
.zm { width: 13px; margin-left: 6px; text-align: center; font: 14px/1 "Liberation Sans", sans-serif; }
.slider { width: 100px; height: 1px; background: #444; position: relative; }
.slider i { position: absolute; left: 48px; top: -5px; width: 5px; height: 11px; background: #444; }
.zm-p { margin-left: 2px; }
.pct { margin: 0 7px 0 12px; font: 12px "Liberation Sans", sans-serif; }
```
